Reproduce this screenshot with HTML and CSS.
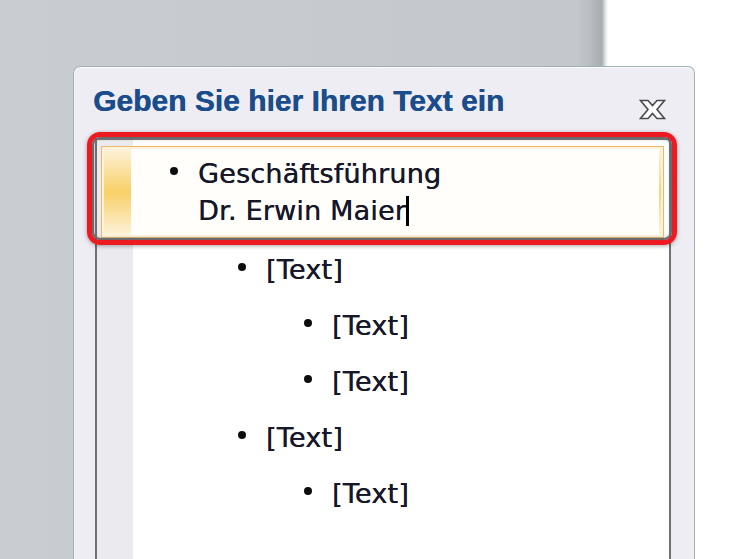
FILE: index.html
```html
<!DOCTYPE html>
<html lang="de">
<head>
<meta charset="utf-8">
<title>Textbereich</title>
<link rel="stylesheet" href="styles.css">
</head>
<body>
<div class="window">
  <div class="titlebar">
    <h1 class="title">Geben Sie hier Ihren Text ein</h1>
    <svg class="close" viewBox="0 0 27 21" width="27" height="21" aria-label="Schließen">
      <path d="M1.5 1.5H9L13.5 6.5L18 1.5H25.5L18 10.5L25.5 19.5H18L13.5 14.5L9 19.5H1.5L9 10.5Z" fill="#ffffff" stroke="#4a4a4d" stroke-width="1.6" stroke-linejoin="miter"/>
    </svg>
  </div>
  <div class="textbox">
    <ul class="list">
      <li class="item l1 selected">
        <span class="bullet"></span>
        <span class="text">Geschäftsführung<br>Dr. Erwin Maier<span class="caret"></span></span>
        <span class="ring"></span>
      </li>
      <li class="item l2"><span class="bullet"></span><span class="text">[Text]</span></li>
      <li class="item l3"><span class="bullet"></span><span class="text">[Text]</span></li>
      <li class="item l3"><span class="bullet"></span><span class="text">[Text]</span></li>
      <li class="item l2"><span class="bullet"></span><span class="text">[Text]</span></li>
      <li class="item l3"><span class="bullet"></span><span class="text">[Text]</span></li>
    </ul>
  </div>
</div>
</body>
</html>
```
FILE: styles.css
```css
html, body {
  margin: 0;
  height: 559px;
  overflow: hidden;
}

body {
  box-sizing: border-box;
  padding-top: 66px;
  font-family: "DejaVu Sans", "Noto Sans", sans-serif;
  background: linear-gradient(to right,
    #c9cdd1 0px,
    #c4c8cc 575px,
    #b8bdc1 590px,
    #a6acb0 602px,
    #dde1e2 605px,
    #ffffff 608px);
}

.window {
  margin-left: 73px;
  width: 622px;
  height: 520px;
  box-sizing: border-box;
  border: 1px solid #9fb1b5;
  border-bottom: none;
  border-radius: 7px 7px 0 0;
  background: #ededf3;
  box-shadow: inset 0 1px 0 #fafafc, inset 1px 0 0 #f7f7fa;
}

.titlebar {
  display: flex;
  align-items: flex-end;
  justify-content: space-between;
  height: 34px;
  padding: 17px 28px 0 19px;
}

.title {
  margin: 0;
  font: bold 30px/34px "Liberation Sans", Arial, sans-serif;
  color: #1b4d8c;
  text-shadow: 0.4px 0 0 #1b4d8c;
}

.close {
  display: block;
  width: 27px;
  height: 21px;
  margin-bottom: -2px;
}

.textbox {
  margin: 20px 23px 0 21px;
  height: 460px;
  border: 2px solid #6f6f74;
  border-bottom: none;
  background: linear-gradient(to right, #ebebef 0, #ebebef 36px, #ffffff 36px);
}

.list {
  list-style: none;
  margin: 0;
  padding: 6px 5px 0 0;
  display: flex;
  flex-direction: column;
}

.item {
  display: flex;
  align-items: flex-start;
  font-size: 27px;
  line-height: 37px;
  letter-spacing: 0.2px;
  color: #17172a;
  text-shadow: 0.35px 0 0 #17172a;
  margin-bottom: 19px;
}

.bullet {
  flex: none;
  width: 8px;
  height: 8px;
  margin-top: 12px;
  border-radius: 50%;
  background: #0d0d10;
}

.text {
  margin-left: 20px;
  white-space: nowrap;
}

.l2 {
  padding-left: 141px;
}

.l3 {
  padding-left: 207px;
}

.selected {
  position: relative;
  margin: 0 0 13px 4px;
  padding: 8px 0 8px 68px;
  border: 1px solid #efb864;
  background:
    linear-gradient(to bottom, #fdf4df 0%, #f8cf66 50%, #fdf4df 100%) left top / 29px 100% no-repeat,
    linear-gradient(to bottom, #fdf4df 0%, #f8d57c 50%, #fdf4df 100%) right top / 4px 100% no-repeat,
    #fffefb;
  box-shadow: inset 0 0 0 2px #fdf3dd;
}

.caret {
  display: inline-block;
  width: 3px;
  height: 30px;
  margin-left: 0;
  vertical-align: -6px;
  background: #000000;
}

.ring {
  position: absolute;
  left: -15px;
  right: -14px;
  top: -15px;
  bottom: -8px;
  border: 5px solid #ee1a22;
  border-radius: 13px;
  box-shadow: inset 0 0 0 2px #6a6a6c, inset 0 0 2px 3px rgba(120, 120, 120, 0.35), 0 1px 4px rgba(0, 0, 0, 0.35);
  pointer-events: none;
}
```
